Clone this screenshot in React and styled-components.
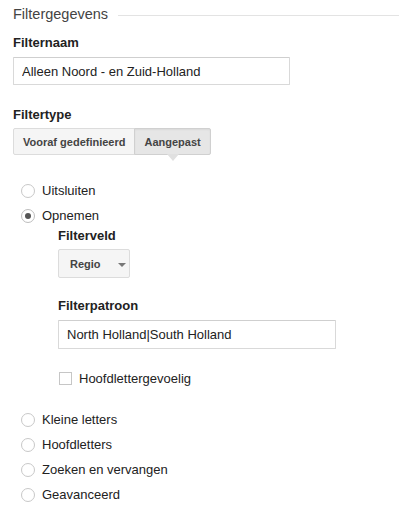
import React from "react";
import styled, { createGlobalStyle } from "styled-components";

const Global = createGlobalStyle`
  html, body { margin: 0; padding: 0; background: #fff; }
  body { font-family: "Liberation Sans", Arial, sans-serif; color: #222; }
  * { box-sizing: border-box; }
`;

const Page = styled.div`
  width: 399px;
  height: 513px;
  padding-left: 13px;
  overflow: hidden;
`;

const Legend = styled.div`
  display: flex;
  align-items: center;
  height: 28px;
  gap: 10px;
`;

const LegendTitle = styled.div`
  font-size: 14.5px;
  color: #444;
  line-height: 28px;
  white-space: nowrap;
`;

const Rule = styled.div`
  flex: 1;
  height: 1px;
  background: #e3e3e3;
  margin-top: 2px;
`;

const Label = styled.div`
  font-size: 13px;
  font-weight: bold;
  color: #222;
  line-height: 16px;
  margin-top: ${(p) => p.$top || 0}px;
`;

const TextInput = styled.input`
  display: block;
  width: ${(p) => p.$width}px;
  height: ${(p) => p.$height}px;
  margin-top: 6px;
  padding: 0 8px;
  border: 1px solid #d9d9d9;
  border-top-color: #cfcfcf;
  border-radius: 1px;
  font-family: "Liberation Sans", Arial, sans-serif;
  font-size: 13px;
  color: #222;
  background: #fff;
  outline: none;
`;

const ButtonGroup = styled.div`
  display: flex;
  margin-top: 5px;
`;

const SegButton = styled.div`
  position: relative;
  height: 27px;
  padding: 0 9px;
  display: flex;
  align-items: center;
  font-size: 11px;
  font-weight: bold;
  color: #444;
  background: ${(p) => (p.$active ? "#e6e6e6" : "#f5f5f5")};
  border: 1px solid ${(p) => (p.$active ? "#d0d0d0" : "#dcdcdc")};
  margin-left: ${(p) => (p.$first ? 0 : -1)}px;
  border-radius: ${(p) => (p.$first ? "2px 0 0 2px" : "0 2px 2px 0")};
  box-shadow: ${(p) => (p.$active ? "inset 0 1px 2px rgba(0,0,0,0.06)" : "none")};
  &::after {
    content: "";
    display: ${(p) => (p.$active ? "block" : "none")};
    position: absolute;
    left: 50%;
    bottom: -7px;
    margin-left: -6px;
    width: 0;
    height: 0;
    border-left: 6px solid transparent;
    border-right: 6px solid transparent;
    border-top: 7px solid #e0e0e0;
  }
`;

const RadioList = styled.div`
  display: flex;
  flex-direction: column;
  margin-top: ${(p) => p.$top || 0}px;
`;

const RadioRow = styled.div`
  display: flex;
  align-items: center;
  height: 25px;
  padding-left: 8px;
  gap: 7px;
  font-size: 13px;
  color: #222;
`;

const RadioCircle = styled.span`
  width: 14px;
  height: 14px;
  border-radius: 50%;
  border: 1px solid ${(p) => (p.$checked ? "#bdbdbd" : "#c8c8c8")};
  background: #fff;
  display: flex;
  align-items: center;
  justify-content: center;
  flex: none;
  &::after {
    content: "";
    display: ${(p) => (p.$checked ? "block" : "none")};
    width: 6px;
    height: 6px;
    border-radius: 50%;
    background: #555;
  }
`;

const SubPanel = styled.div`
  padding-left: 45px;
`;

const Dropdown = styled.div`
  margin-top: 5px;
  width: 72px;
  height: 29px;
  display: flex;
  align-items: center;
  padding-left: 11px;
  gap: 17px;
  font-size: 11px;
  font-weight: bold;
  color: #444;
  background: #f5f5f5;
  border: 1px solid #dcdcdc;
  border-radius: 2px;
`;

const Caret = styled.span`
  width: 0;
  height: 0;
  margin-top: 2px;
  border-left: 4px solid transparent;
  border-right: 4px solid transparent;
  border-top: 4px solid #777;
`;

const CheckRow = styled.div`
  display: flex;
  align-items: center;
  height: 20px;
  margin-top: 19px;
  padding-left: 1px;
  gap: 7px;
  font-size: 13px;
  color: #222;
`;

const CheckBox = styled.span`
  width: 13px;
  height: 13px;
  border: 1px solid #c6c6c6;
  background: #fff;
  flex: none;
`;

const Radio = ({ checked, children }) => (
  <RadioRow>
    <RadioCircle $checked={checked} />
    <span>{children}</span>
  </RadioRow>
);

export default function App() {
  return (
    <>
      <Global />
      <Page>
        <Legend>
          <LegendTitle>Filtergegevens</LegendTitle>
          <Rule />
        </Legend>

        <Label $top={7}>Filternaam</Label>
        <TextInput $width={277} $height={28} readOnly value="Alleen Noord - en Zuid-Holland" />

        <Label $top={22}>Filtertype</Label>
        <ButtonGroup>
          <SegButton $first>Vooraf gedefinieerd</SegButton>
          <SegButton $active>Aangepast</SegButton>
        </ButtonGroup>

        <RadioList $top={23}>
          <Radio>Uitsluiten</Radio>
          <Radio checked>Opnemen</Radio>
        </RadioList>

        <SubPanel>
          <Label>Filterveld</Label>
          <Dropdown>
            <span>Regio</span>
            <Caret />
          </Dropdown>

          <Label $top={20}>Filterpatroon</Label>
          <TextInput $width={278} $height={29} readOnly value="North Holland|South Holland" />

          <CheckRow>
            <CheckBox />
            <span>Hoofdlettergevoelig</span>
          </CheckRow>
        </SubPanel>

        <RadioList $top={19}>
          <Radio>Kleine letters</Radio>
          <Radio>Hoofdletters</Radio>
          <Radio>Zoeken en vervangen</Radio>
          <Radio>Geavanceerd</Radio>
        </RadioList>
      </Page>
    </>
  );
}
